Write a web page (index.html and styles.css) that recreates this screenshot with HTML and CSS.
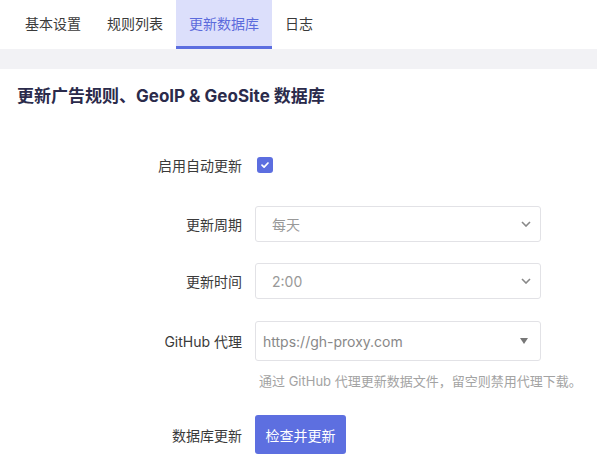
FILE: index.html
```html
<!DOCTYPE html>
<html lang="zh">
<head>
<meta charset="utf-8">
<link rel="stylesheet" href="styles.css">
</head>
<body>
<nav class="tabs">
  <a class="tab">基本设置</a>
  <a class="tab">规则列表</a>
  <a class="tab active">更新数据库</a>
  <a class="tab">日志</a>
</nav>
<div class="band"></div>
<main class="content">
  <h2 class="title">更新广告规则、GeoIP &amp; GeoSite 数据库</h2>
  <div class="form">
    <div class="row row-check">
      <label class="label">启用自动更新</label>
      <div class="field">
        <span class="checkbox">
          <svg width="10" height="10" viewBox="0 0 10 10"><path d="M2 5.2 L4.1 7.2 L8 3" fill="none" stroke="#fff" stroke-width="1.7" stroke-linecap="round" stroke-linejoin="round"/></svg>
        </span>
      </div>
    </div>
    <div class="row row-sel1">
      <label class="label">更新周期</label>
      <div class="field">
        <div class="select">
          <span class="value">每天</span>
          <svg class="chev" width="10" height="6" viewBox="0 0 10 6"><path d="M1 1 L5 5 L9 1" fill="none" stroke="#888" stroke-width="1.6"/></svg>
        </div>
      </div>
    </div>
    <div class="row row-sel2">
      <label class="label">更新时间</label>
      <div class="field">
        <div class="select">
          <span class="value">2:00</span>
          <svg class="chev" width="10" height="6" viewBox="0 0 10 6"><path d="M1 1 L5 5 L9 1" fill="none" stroke="#888" stroke-width="1.6"/></svg>
        </div>
      </div>
    </div>
    <div class="row row-proxy">
      <label class="label">GitHub 代理</label>
      <div class="field">
        <div class="combo">
          <span class="value">https://gh-proxy.com</span>
          <svg class="tri" width="8" height="6" viewBox="0 0 8 6"><path d="M0 0 L8 0 L4 6 Z" fill="#777"/></svg>
        </div>
      </div>
    </div>
    <div class="help">通过 GitHub 代理更新数据文件，留空则禁用代理下载。</div>
    <div class="row row-btn">
      <label class="label">数据库更新</label>
      <div class="field">
        <button class="btn">检查并更新</button>
      </div>
    </div>
  </div>
</main>
</body>
</html>
```
FILE: styles.css
```css
html, body {
  margin: 0;
  padding: 0;
  background: #fff;
  font-family: Inter, "Noto Sans CJK SC", sans-serif;
  color: #333;
}
.tabs {
  display: flex;
  height: 49px;
  padding-left: 12px;
  background: #fff;
}
.tab {
  display: flex;
  align-items: center;
  padding: 0 13px;
  height: 46px;
  font-size: 14px;
  color: #3a3a3a;
  border-bottom: 3px solid transparent;
}
.tab.active {
  background: #dcdffb;
  color: #5c6bdc;
  border-bottom-color: #5c6ee0;
}
.band {
  height: 20px;
  background: #f2f2f5;
}
.content {
  padding: 15px 17px 0;
}
.title {
  margin: 0;
  font-size: 17px;
  font-weight: 700;
  color: #2b2b4b;
  line-height: 24px;
}
.form {
  display: flex;
  flex-direction: column;
  margin-top: 42px;
}
.row {
  display: grid;
  grid-template-columns: 225px 286px;
  column-gap: 13px;
  align-items: center;
}
.label {
  text-align: right;
  font-size: 14px;
  color: #3a3a3a;
}
.row-check { height: 30px; }
.row-sel1 { margin-top: 26px; }
.row-sel2 { margin-top: 21px; }
.row-proxy { margin-top: 22px; }
.row-btn { margin-top: 24px; }
.checkbox {
  display: flex;
  align-items: center;
  justify-content: center;
  width: 16px;
  height: 16px;
  margin-left: 2px;
  border-radius: 3px;
  background: #5c6ee0;
}
.select, .combo {
  box-sizing: border-box;
  display: flex;
  align-items: center;
  justify-content: space-between;
  height: 36px;
  border: 1px solid #e2e2e6;
  border-radius: 3px;
  padding: 0 9px 0 16px;
  background: #fff;
}
.combo {
  height: 40px;
  padding: 0 12px 0 7px;
}
.value {
  font-size: 14px;
  color: #999;
}
.combo .value { color: #888; }
.help {
  margin: 10px 0 0 242px;
  font-size: 13px;
  line-height: 20px;
  color: #a3a3a3;
  white-space: nowrap;
}
.btn {
  box-sizing: border-box;
  width: 91px;
  height: 39px;
  border: 0;
  border-radius: 3px;
  background: #5d6fe0;
  color: #fff;
  font-family: Inter, "Noto Sans CJK SC", sans-serif;
  font-size: 14px;
  cursor: pointer;
}
```
